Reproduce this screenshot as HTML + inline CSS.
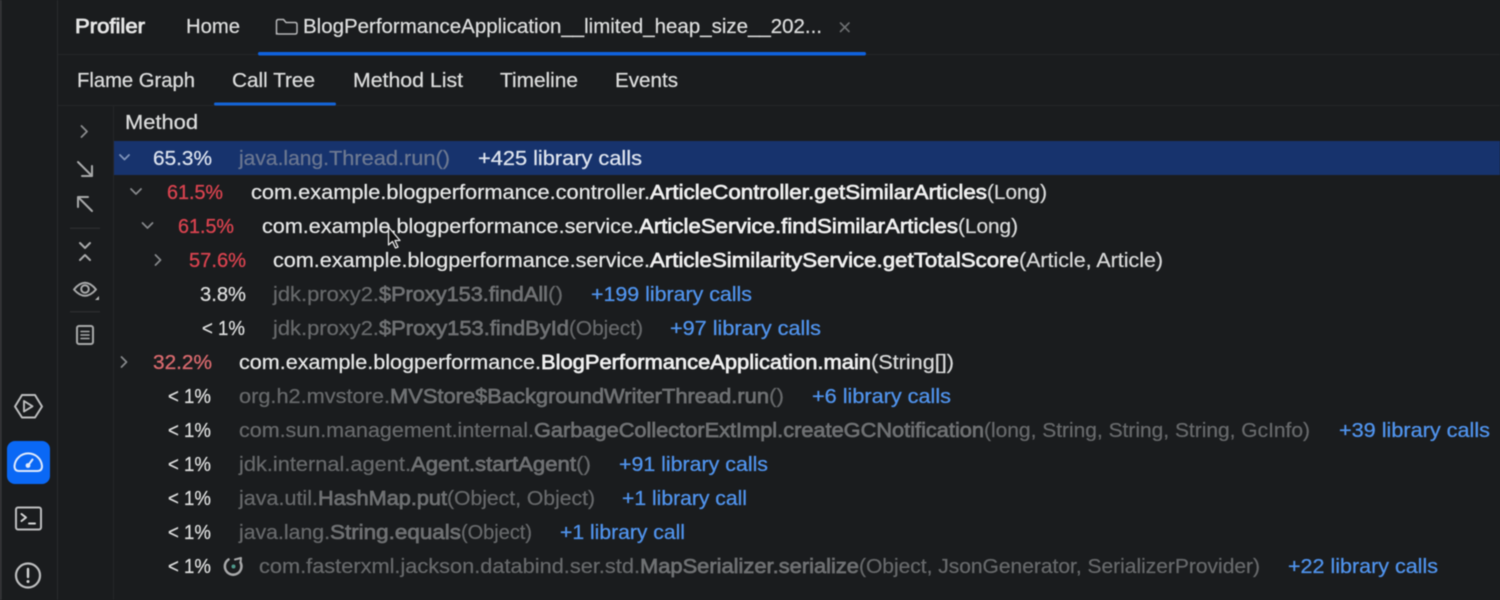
<!DOCTYPE html>
<html><head><meta charset="utf-8"><style>
html,body{margin:0;padding:0;background:#1a1c1e;width:1500px;height:600px;overflow:hidden}
svg{display:block;filter:blur(.55px)}
text{font-family:"Liberation Sans",sans-serif;font-size:20.5px;fill:#dcdddd;stroke:#dcdddd;stroke-width:.25px}
.g{fill:#67696b;stroke:#67696b}
.gb{fill:#6f7173;stroke:#6f7173;stroke-width:.7px}
.w{fill:#e6e7e7;stroke:#e6e7e7}
.wb{fill:#f0f0f0;stroke:#f0f0f0;stroke-width:.7px}
.l{fill:#5093ec;stroke:#5093ec;stroke-width:.3px}
.r{fill:#d9434f;stroke:#d9434f;stroke-width:.3px}
.p{fill:#d8d9d9;stroke:#d8d9d9}
.ic{fill:none;stroke:#a8a9aa;stroke-width:2;stroke-linecap:round;stroke-linejoin:round}
.ch{fill:none;stroke:#85878a;stroke-width:1.8;stroke-linecap:round;stroke-linejoin:round}
</style></head><body>
<svg width="1500" height="600" viewBox="0 0 1500 600" xmlns="http://www.w3.org/2000/svg">
<rect width="1500" height="600" fill="#1a1c1e"/>
<rect x="0" width="1.5" height="600" fill="#3a3b3d"/>
<rect x="57" width="1" height="600" fill="#2a2b2d"/>
<rect x="58" y="54" width="1442" height="1" fill="#242628"/>
<rect x="58" y="105" width="1442" height="1" fill="#242628"/>
<rect x="113" y="106" width="1" height="494" fill="#242628"/>

<text x="75" y="33" lengthAdjust="spacingAndGlyphs" textLength="70" style="fill:#e6e6e6;stroke:#e6e6e6;stroke-width:.8px">Profiler</text>
<text x="186" y="33" lengthAdjust="spacingAndGlyphs" textLength="54">Home</text>
<path d="M276.500 34V21.500q0-2 2-2h5l2.500 3h9q2 0 2 2V32q0 2-2 2h-16.500q-2 0-2-2z" class="ic" style="stroke:#b5b6b7;stroke-width:1.500"/>
<text x="303" y="33" lengthAdjust="spacingAndGlyphs" textLength="519">BlogPerformanceApplication__limited_heap_size__202...</text>
<path d="M840.500 23l8.500 8.500M849 23l-8.500 8.500" class="ic" style="stroke:#6d6f71;stroke-width:1.600"/>
<rect x="258" y="52" width="608" height="3.500" rx="1.700" fill="#0f62de"/>

<text x="77" y="87" lengthAdjust="spacingAndGlyphs" textLength="118">Flame Graph</text>
<text x="232" y="87" lengthAdjust="spacingAndGlyphs" textLength="83">Call Tree</text>
<text x="353" y="87" lengthAdjust="spacingAndGlyphs" textLength="110">Method List</text>
<text x="500" y="87" lengthAdjust="spacingAndGlyphs" textLength="78">Timeline</text>
<text x="615" y="87" lengthAdjust="spacingAndGlyphs" textLength="63">Events</text>
<rect x="214" y="102.500" width="122" height="3" rx="1.500" fill="#1464d8"/>

<text x="125" y="129" lengthAdjust="spacingAndGlyphs" textLength="73">Method</text>

<!-- tool strip -->
<path d="M81.500 126l5.500 5.500-5.500 5.500" class="ic" style="stroke:#8b8c8e;stroke-width:1.800"/>
<path d="M78 162l14 14M92 166v10H82" class="ic"/>
<path d="M92 211L78 197M78 207v-10h10" class="ic"/>
<rect x="70" y="227.500" width="30" height="1.500" fill="#2a2b2d"/>
<path d="M80 243l5 5 5-5M80 260l5-5 5 5" class="ic"/>
<path d="M74 289.500q11-13.500 22 0q-11 12.500-22 0z" class="ic"/>
<circle cx="85" cy="289" r="3.800" class="ic"/>
<path d="M95 300h4v-4z" fill="#b4b5b6"/>
<rect x="70" y="311" width="30" height="1.500" fill="#2a2b2d"/>
<rect x="77" y="326" width="16" height="18" rx="2" class="ic"/>
<path d="M81 331.500h8M81 335h8M81 338.500h8" class="ic" style="stroke-width:1.500"/>

<!-- left bar -->
<path d="M22 395h13l7 11.500-7 11H22l-7-11z" class="ic" style="stroke:#bdbebf;stroke-width:2"/>
<path d="M24 401v10.500l8.500-5.200z" class="ic" style="stroke:#bdbebf;stroke-width:1.900"/>
<rect x="7" y="441" width="43" height="43" rx="8" fill="#0a68f5"/>
<path d="M19 471q-4.500 0-4.500-5a13.800 13.800 0 0 1 27.500 0q0 5-4.500 5z" fill="none" stroke="#dfe9fb" stroke-width="2" stroke-linejoin="round"/>
<path d="M28.500 465l4-5.500" fill="none" stroke="#dfe9fb" stroke-width="2" stroke-linecap="round"/>
<circle cx="28" cy="465.500" r="2.400" fill="#dfe9fb"/>
<rect x="16" y="507.500" width="25" height="22" rx="2" class="ic" style="stroke:#bdbebf"/>
<path d="M21.500 514l4.500 3.500-4.500 3.500M29 523.500h6" class="ic" style="stroke:#d3d4d4"/>
<circle cx="28" cy="575.500" r="12" class="ic" style="stroke:#bdbebf;stroke-width:2.200"/>
<path d="M28 569v8" class="ic" style="stroke:#d3d4d4;stroke-width:2.400"/>
<circle cx="28" cy="581.500" r="1.500" fill="#d3d4d4"/>

<!-- selected -->
<rect x="114" y="141" width="1386" height="34" fill="#17336d"/>
<path d="M120 155l4.500 4.500 4.500-4.500" class="ch" style="stroke:#7f93ba"/>
<text x="153" y="165" lengthAdjust="spacingAndGlyphs" textLength="59" style="fill:#dbe2ee;stroke:#dbe2ee">65.3%</text>
<text x="239" y="165" lengthAdjust="spacingAndGlyphs" textLength="90" style="fill:#6a7690;stroke:#6a7690">java.lang.</text>
<text x="329" y="165" lengthAdjust="spacingAndGlyphs" textLength="121" style="fill:#6d7991;stroke:#6d7991">Thread.run()</text>
<text x="478" y="165" lengthAdjust="spacingAndGlyphs" textLength="164" style="fill:#dfe5ef;stroke:#dfe5ef">+425 library calls</text>

<!-- row 2 -->
<path d="M131 189l5 5 5-5" class="ch"/>
<text x="167" y="199" class="r" lengthAdjust="spacingAndGlyphs" textLength="56">61.5%</text>
<text x="251" y="199" class="w" lengthAdjust="spacingAndGlyphs" textLength="399">com.example.blogperformance.controller.</text>
<text x="650" y="199" class="wb" lengthAdjust="spacingAndGlyphs" textLength="337">ArticleController.getSimilarArticles</text>
<text x="987" y="199" class="p" lengthAdjust="spacingAndGlyphs" textLength="60">(Long)</text>

<!-- row 3 -->
<path d="M142.500 223l5 5 5-5" class="ch"/>
<text x="178" y="233" class="r" lengthAdjust="spacingAndGlyphs" textLength="56">61.5%</text>
<text x="262" y="233" class="w" lengthAdjust="spacingAndGlyphs" textLength="377">com.example.blogperformance.service.</text>
<text x="639" y="233" class="wb" lengthAdjust="spacingAndGlyphs" textLength="319">ArticleService.findSimilarArticles</text>
<text x="958" y="233" class="p" lengthAdjust="spacingAndGlyphs" textLength="60">(Long)</text>

<!-- row 4 -->
<path d="M155.500 255l5 5-5 5" class="ch"/>
<text x="189" y="267" class="r" lengthAdjust="spacingAndGlyphs" textLength="57">57.6%</text>
<text x="273" y="267" class="w" lengthAdjust="spacingAndGlyphs" textLength="377">com.example.blogperformance.service.</text>
<text x="650" y="267" class="wb" lengthAdjust="spacingAndGlyphs" textLength="369">ArticleSimilarityService.getTotalScore</text>
<text x="1019" y="267" class="p" lengthAdjust="spacingAndGlyphs" textLength="144">(Article, Article)</text>

<!-- row 5 -->
<text x="200" y="301" lengthAdjust="spacingAndGlyphs" textLength="46">3.8%</text>
<text x="273" y="301" class="g" lengthAdjust="spacingAndGlyphs" textLength="106">jdk.proxy2.</text>
<text x="379" y="301" class="gb" lengthAdjust="spacingAndGlyphs" textLength="169">$Proxy153.findAll</text>
<text x="548" y="301" class="g" lengthAdjust="spacingAndGlyphs" textLength="15">()</text>
<text x="591" y="301" class="l" lengthAdjust="spacingAndGlyphs" textLength="161">+199 library calls</text>

<!-- row 6 -->
<text x="202" y="335" lengthAdjust="spacingAndGlyphs" textLength="43">&lt; 1%</text>
<text x="273" y="335" class="g" lengthAdjust="spacingAndGlyphs" textLength="106">jdk.proxy2.</text>
<text x="379" y="335" class="gb" lengthAdjust="spacingAndGlyphs" textLength="190">$Proxy153.findById</text>
<text x="569" y="335" class="g" lengthAdjust="spacingAndGlyphs" textLength="74">(Object)</text>
<text x="670" y="335" class="l" lengthAdjust="spacingAndGlyphs" textLength="151">+97 library calls</text>

<!-- row 7 -->
<path d="M121.500 357l5 5-5 5" class="ch"/>
<text x="153" y="369" class="r" lengthAdjust="spacingAndGlyphs" textLength="59" style="fill:#d96a6e;stroke:#d96a6e">32.2%</text>
<text x="239" y="369" class="w" lengthAdjust="spacingAndGlyphs" textLength="302">com.example.blogperformance.</text>
<text x="541" y="369" class="wb" lengthAdjust="spacingAndGlyphs" textLength="330">BlogPerformanceApplication.main</text>
<text x="871" y="369" class="p" lengthAdjust="spacingAndGlyphs" textLength="83">(String[])</text>

<!-- row 8 -->
<text x="168" y="403" lengthAdjust="spacingAndGlyphs" textLength="43">&lt; 1%</text>
<text x="239" y="403" class="g" lengthAdjust="spacingAndGlyphs" textLength="151">org.h2.mvstore.</text>
<text x="390" y="403" class="gb" lengthAdjust="spacingAndGlyphs" textLength="379">MVStore$BackgroundWriterThread.run</text>
<text x="769" y="403" class="g" lengthAdjust="spacingAndGlyphs" textLength="15">()</text>
<text x="812" y="403" class="l" lengthAdjust="spacingAndGlyphs" textLength="139">+6 library calls</text>

<!-- row 9 -->
<text x="168" y="437" lengthAdjust="spacingAndGlyphs" textLength="43">&lt; 1%</text>
<text x="239" y="437" class="g" lengthAdjust="spacingAndGlyphs" textLength="295">com.sun.management.internal.</text>
<text x="534" y="437" class="gb" lengthAdjust="spacingAndGlyphs" textLength="450">GarbageCollectorExtImpl.createGCNotification</text>
<text x="984" y="437" class="g" lengthAdjust="spacingAndGlyphs" textLength="326">(long, String, String, String, GcInfo)</text>
<text x="1339" y="437" class="l" lengthAdjust="spacingAndGlyphs" textLength="151">+39 library calls</text>

<!-- row 10 -->
<text x="168" y="471" lengthAdjust="spacingAndGlyphs" textLength="43">&lt; 1%</text>
<text x="239" y="471" class="g" lengthAdjust="spacingAndGlyphs" textLength="172">jdk.internal.agent.</text>
<text x="411" y="471" class="gb" lengthAdjust="spacingAndGlyphs" textLength="165">Agent.startAgent</text>
<text x="576" y="471" class="g" lengthAdjust="spacingAndGlyphs" textLength="15">()</text>
<text x="619" y="471" class="l" lengthAdjust="spacingAndGlyphs" textLength="149">+91 library calls</text>

<!-- row 11 -->
<text x="168" y="505" lengthAdjust="spacingAndGlyphs" textLength="43">&lt; 1%</text>
<text x="239" y="505" class="g" lengthAdjust="spacingAndGlyphs" textLength="79">java.util.</text>
<text x="318" y="505" class="gb" lengthAdjust="spacingAndGlyphs" textLength="129">HashMap.put</text>
<text x="447" y="505" class="g" lengthAdjust="spacingAndGlyphs" textLength="148">(Object, Object)</text>
<text x="622" y="505" class="l" lengthAdjust="spacingAndGlyphs" textLength="125">+1 library call</text>

<!-- row 12 -->
<text x="168" y="539" lengthAdjust="spacingAndGlyphs" textLength="43">&lt; 1%</text>
<text x="239" y="539" class="g" lengthAdjust="spacingAndGlyphs" textLength="91">java.lang.</text>
<text x="330" y="539" class="gb" lengthAdjust="spacingAndGlyphs" textLength="131">String.equals</text>
<text x="461" y="539" class="g" lengthAdjust="spacingAndGlyphs" textLength="71">(Object)</text>
<text x="560" y="539" class="l" lengthAdjust="spacingAndGlyphs" textLength="125">+1 library call</text>

<!-- row 13 -->
<text x="168" y="573" lengthAdjust="spacingAndGlyphs" textLength="43">&lt; 1%</text>
<path d="M228.500 559.500a8.300 8.300 0 1 0 12 3" fill="none" stroke="#a8a9aa" stroke-width="2.500" stroke-linecap="round"/>
<path d="M235 559.500l6-1.500M241 558l-.5 4.500" fill="none" stroke="#a8a9aa" stroke-width="2" stroke-linecap="round"/>
<circle cx="233.500" cy="566.500" r="2" fill="#4f9a8c"/>
<text x="259" y="573" class="g" lengthAdjust="spacingAndGlyphs" textLength="381">com.fasterxml.jackson.databind.ser.std.</text>
<text x="640" y="573" class="gb" lengthAdjust="spacingAndGlyphs" textLength="219">MapSerializer.serialize</text>
<text x="859" y="573" class="g" lengthAdjust="spacingAndGlyphs" textLength="401">(Object, JsonGenerator, SerializerProvider)</text>
<text x="1288" y="573" class="l" lengthAdjust="spacingAndGlyphs" textLength="150">+22 library calls</text>

<!-- cursor -->
<path d="M388.500 227v18l4-3.500 3 6.500 2.500-1-3-6.500h5z" fill="#111" stroke="#e8e8e8" stroke-width="1.300" stroke-linejoin="round"/>
</svg>
</body></html>
